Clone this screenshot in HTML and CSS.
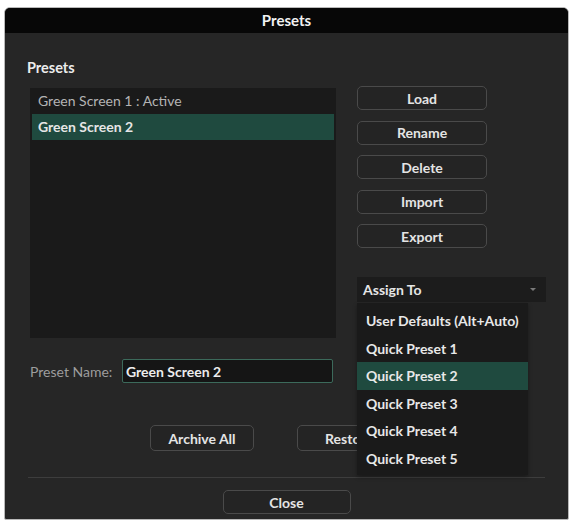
FILE: index.html
```html
<!DOCTYPE html>
<html>
  <head>
    <title>Presets</title>
    <link rel="stylesheet" href="styles.css">
  </head>
<body>
  <div class="dialog">
    <div class="titlebar">Presets</div>

    <div class="content">
      <div class="main">
        <div class="left">
          <div class="section-label">Presets</div>
          <ul class="preset-list">
            <li>Green Screen 1 : Active</li>
            <li class="selected">Green Screen 2</li>
          </ul>
        </div>

        <div class="right">
          <div class="actions">
            <button class="btn">Load</button>
            <button class="btn">Rename</button>
            <button class="btn">Delete</button>
            <button class="btn">Import</button>
            <button class="btn">Export</button>
          </div>

          <div class="assign">
            <div class="select">
              <span>Assign To</span>
              <span class="arrow"></span>
            </div>
            <ul class="menu">
              <li>User Defaults (Alt+Auto)</li>
              <li>Quick Preset 1</li>
              <li class="selected">Quick Preset 2</li>
              <li>Quick Preset 3</li>
              <li>Quick Preset 4</li>
              <li>Quick Preset 5</li>
            </ul>
          </div>
        </div>
      </div>

      <div class="name-row">
        <label>Preset Name:</label>
        <input type="text" value="Green Screen 2" />
      </div>

      <div class="archive-row">
        <button class="btn wide">Archive All</button>
        <button class="btn wide">Restore</button>
      </div>

      <div class="separator"></div>

      <div class="footer">
        <button class="btn close">Close</button>
      </div>
    </div>
  </div>
</body>
</html>
```

FILE: styles.css
```css
body {
  margin: 0;
  background: #fff;
  font-family: Lato, "Open Sans", sans-serif;
  font-size: 14px;
  color: #e2e2e2;
}

.dialog {
  box-sizing: border-box;
  width: 565px;
  height: 513px;
  margin: 7px 0 0 4px;
  border: 1px solid #b9b9b9;
  border-radius: 6px 6px 2px 2px;
  background: #262626;
  overflow: hidden;
}

.titlebar {
  height: 25px;
  line-height: 25px;
  background: #070707;
  text-align: center;
  font-weight: bold;
  font-size: 15px;
  color: #f2f2f2;
}

.content {
  padding: 0 22px 0 22px;
}

.main {
  display: flex;
  gap: 21px;
  margin-top: 28px;
}

.left {
  width: 309px;
}

.section-label {
  height: 14px;
  line-height: 14px;
  font-size: 14.5px;
  font-weight: bold;
  color: #ececec;
  margin-bottom: 13px;
}

.preset-list {
  list-style: none;
  margin: 0 0 0 3px;
  padding: 0 2px;
  width: 306px;
  height: 250px;
  box-sizing: border-box;
  background: #1a1a1a;
}

.preset-list li {
  height: 26px;
  line-height: 25px;
  padding-left: 6px;
  color: #b4b4b4;
}

.preset-list li.selected {
  background: #1f4a3f;
  color: #e6e6e6;
  font-weight: bold;
}

.right {
  width: 190px;
  padding-top: 25px;
}

.actions {
  display: flex;
  flex-direction: column;
  gap: 10.5px;
  width: 130px;
}

.btn {
  box-sizing: border-box;
  height: 24px;
  border: 1px solid #4a4a4a;
  border-radius: 5px;
  background: #242424;
  color: #e4e4e4;
  font-family: inherit;
  font-size: 14px;
  font-weight: bold;
  padding: 0;
}

.assign {
  position: relative;
  margin-top: 29px;
}

.select {
  display: flex;
  justify-content: space-between;
  align-items: center;
  height: 25px;
  padding: 0 10px 0 6px;
  background: #1c1c1c;
  font-weight: bold;
  color: #e6e6e6;
}

.arrow {
  width: 0;
  height: 0;
  border-left: 3px solid transparent;
  border-right: 3px solid transparent;
  border-top: 3px solid #7a7a7a;
}

.menu {
  position: absolute;
  top: 26px;
  left: 0;
  width: 171px;
  margin: 0;
  padding: 4px 0 3px;
  list-style: none;
  background: #1a1a1a;
  box-shadow: 0 2px 4px rgba(0, 0, 0, 0.35);
}

.menu li {
  height: 27.5px;
  line-height: 27px;
  padding-left: 9px;
  font-weight: bold;
  color: #e8e8e8;
}

.menu li.selected {
  background: #1f4a3f;
}

.name-row {
  display: flex;
  align-items: center;
  gap: 9px;
  margin-top: 21px;
  padding-left: 3px;
}

.name-row label {
  width: 83px;
  color: #9d9d9d;
}

.name-row input {
  box-sizing: border-box;
  width: 211px;
  height: 24px;
  margin: 0;
  padding: 0 3px;
  border: 1px solid #3c6a5b;
  border-radius: 2px;
  background: #151515;
  color: #ececec;
  font-family: inherit;
  font-size: 14px;
  font-weight: bold;
}

.archive-row {
  display: flex;
  gap: 43px;
  margin-top: 42px;
  padding-left: 123px;
}

.btn.wide {
  width: 104px;
  height: 26px;
}

.separator {
  height: 1px;
  margin: 26px 0 0 1px;
  width: 517px;
  background: #3d3d3d;
}

.footer {
  display: flex;
  justify-content: center;
  margin-top: 12px;
}

.btn.close {
  width: 128px;
  height: 24px;
}
```
